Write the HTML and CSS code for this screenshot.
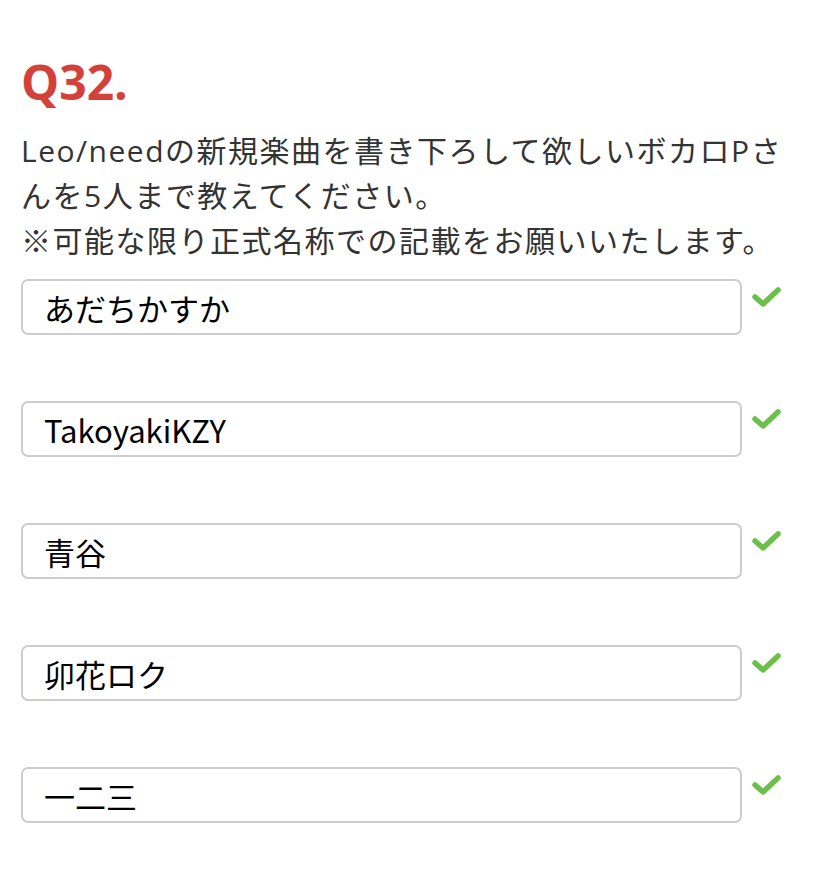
FILE: index.html
```html
<!DOCTYPE html>
<html lang="ja">
<head>
<meta charset="utf-8">
<link rel="stylesheet" href="styles.css">
</head>
<body>
<div class="question">
  <h2 class="q-title">Q32.</h2>
  <p class="q-text">Leo/needの新規楽曲を書き下ろして欲しいボカロPさんを5人まで教えてください。<br>※可能な限り正式名称での記載をお願いいたします。</p>
  <div class="answers">
    <div class="answer-row">
      <div class="answer-box">あだちかすか</div>
      <svg class="check" viewBox="0 0 32 24" width="32" height="24"><path d="M4 12 L12 19 L27 5" fill="none" stroke="#6cc04a" stroke-width="5.5" stroke-linecap="round" stroke-linejoin="round"/></svg>
    </div>
    <div class="answer-row">
      <div class="answer-box">TakoyakiKZY</div>
      <svg class="check" viewBox="0 0 32 24" width="32" height="24"><path d="M4 12 L12 19 L27 5" fill="none" stroke="#6cc04a" stroke-width="5.5" stroke-linecap="round" stroke-linejoin="round"/></svg>
    </div>
    <div class="answer-row">
      <div class="answer-box">青谷</div>
      <svg class="check" viewBox="0 0 32 24" width="32" height="24"><path d="M4 12 L12 19 L27 5" fill="none" stroke="#6cc04a" stroke-width="5.5" stroke-linecap="round" stroke-linejoin="round"/></svg>
    </div>
    <div class="answer-row">
      <div class="answer-box">卯花ロク</div>
      <svg class="check" viewBox="0 0 32 24" width="32" height="24"><path d="M4 12 L12 19 L27 5" fill="none" stroke="#6cc04a" stroke-width="5.5" stroke-linecap="round" stroke-linejoin="round"/></svg>
    </div>
    <div class="answer-row">
      <div class="answer-box">一二三</div>
      <svg class="check" viewBox="0 0 32 24" width="32" height="24"><path d="M4 12 L12 19 L27 5" fill="none" stroke="#6cc04a" stroke-width="5.5" stroke-linecap="round" stroke-linejoin="round"/></svg>
    </div>
  </div>
</div>
</body>
</html>
```
FILE: styles.css
```css
html, body {
  margin: 0;
  padding: 0;
  background: #fff;
}
body {
  font-family: "Open Sans", "Noto Sans CJK JP", sans-serif;
}
.question {
  padding: 52px 0 0 21px;
  width: 790px;
}
.q-title {
  margin: 0;
  font-size: 48px;
  font-weight: 700;
  color: #d3423a;
  line-height: 60px;
}
.q-text {
  margin: 16px 0 0 0;
  width: 770px;
  font-size: 30px;
  line-height: 45px;
  color: #333;
  letter-spacing: 1.5px;
  font-family: "Open Sans", "Noto Sans CJK JP", sans-serif;
}
.answers {
  display: flex;
  flex-direction: column;
  gap: 66px;
  margin-top: 16px;
}
.answer-row {
  display: flex;
  align-items: flex-start;
}
.answer-box {
  box-sizing: border-box;
  width: 721px;
  height: 56px;
  border: 2px solid #cdcdcd;
  border-radius: 7px;
  padding: 0 21px;
  display: flex;
  align-items: center;
  font-family: "Noto Sans CJK JP", sans-serif;
  font-size: 31px;
  color: #000;
}
.check {
  margin: 6px 0 0 9px;
}
```
